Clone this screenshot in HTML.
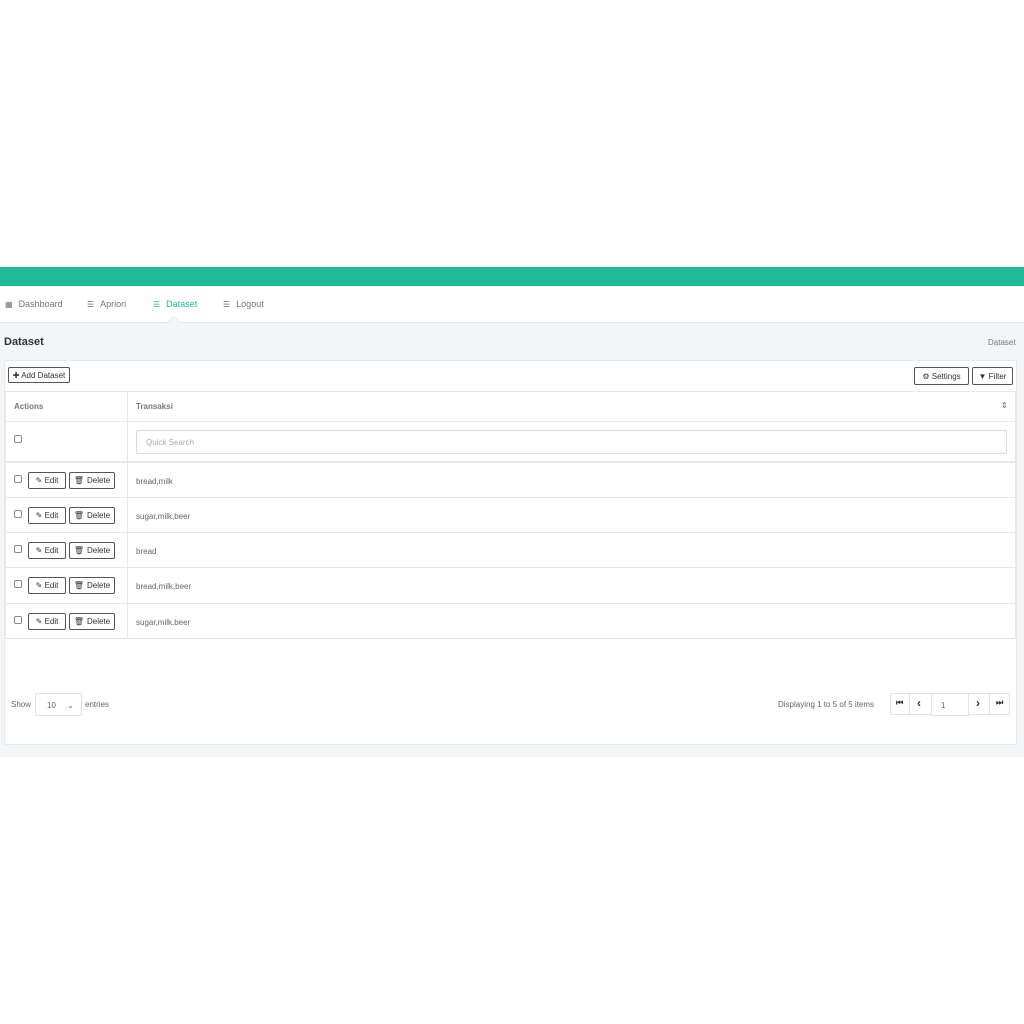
<!DOCTYPE html><html><head><style>
*{box-sizing:border-box;margin:0;padding:0}
body{width:1024px;height:1024px;background:#fff;font-family:"Liberation Sans",sans-serif;position:relative;overflow:hidden;color:#555}
.a{position:absolute}
.btn{position:absolute;border:1px solid #555;border-radius:2px;background:#fff;font-size:8px;color:#333;display:flex;align-items:center;justify-content:center;gap:3px}
.row{position:absolute;left:5px;width:1011px;border-bottom:1px solid #e6e8eb;background:#fff}
.cb{position:absolute;width:8px;height:8px;border:1px solid #888;border-radius:2px}
.t{font-size:8px;color:#666}
.nav{font-size:9px;color:#6b7380;display:flex;align-items:center;gap:6px}
.ic{filter:grayscale(1)}
</style></head><body>
<div class="a" style="top:267px;left:0;width:1024px;height:19px;background:#1dbb98"></div>
<div class="a" style="top:286px;left:0;width:1024px;height:37px;background:#fff;border-bottom:1px solid #e4e6ea"></div>
<div class="a" style="top:323px;left:0;width:1024px;height:434px;background:#f4f5f7"></div>
<div class="a" style="top:318px;left:169px;width:10px;height:10px;background:#f4f5f7;transform:rotate(45deg);border-left:1px solid #e4e6ea;border-top:1px solid #e4e6ea"></div>
<div class="a nav" style="top:299px;left:5px"><span style="font-size:8px">▦</span>Dashboard</div>
<div class="a nav" style="top:299px;left:87px"><span style="font-size:8px">☰</span>Apriori</div>
<div class="a nav" style="top:299px;left:153px;color:#1dbb98"><span style="font-size:8px">☰</span>Dataset</div>
<div class="a nav" style="top:299px;left:223px"><span style="font-size:8px">☰</span>Logout</div>
<div class="a" style="top:336px;left:4px;font-size:11px;font-weight:bold;color:#333">Dataset</div>
<div class="a" style="top:338px;left:988px;font-size:8px;color:#777">Dataset</div>
<div class="a" style="top:360px;left:4px;width:1013px;height:385px;background:#fff;border:1px solid #e6e8eb;border-radius:2px"></div>
<div class="btn" style="top:367px;left:8px;width:62px;height:16px">✚ Add Dataset</div>
<div class="btn" style="top:367px;left:914px;width:55px;height:18px">⚙ Settings</div>
<div class="btn" style="top:367px;left:972px;width:41px;height:18px">▼ Filter</div>
<div class="row" style="top:391px;height:31px;border-top:1px solid #e6e8eb"></div>
<div class="a t" style="top:402px;left:14px;font-weight:bold;color:#777">Actions</div>
<div class="a t" style="top:402px;left:136px;font-weight:bold;color:#777">Transaksi</div>
<div class="a t" style="top:401px;left:1001px">⇕</div>
<div class="row" style="top:422px;height:41px;border-bottom:2px solid #e6e8eb"></div>
<div class="cb" style="top:435px;left:14px"></div>
<div class="a" style="top:430px;left:136px;width:871px;height:24px;border:1px solid #d8dbe0;border-radius:2px;font-size:8px;color:#aaa;padding:7px 9px">Quick Search</div>
<div class="row" style="top:463px;height:35px"></div>
<div class="row" style="top:498px;height:35px"></div>
<div class="row" style="top:533px;height:35px"></div>
<div class="row" style="top:568px;height:36px"></div>
<div class="row" style="top:604px;height:35px"></div>
<div class="a" style="top:391px;left:5px;width:1px;height:248px;background:#e6e8eb"></div>
<div class="a" style="top:391px;left:127px;width:1px;height:248px;background:#e6e8eb"></div>
<div class="a" style="top:391px;left:1015px;width:1px;height:248px;background:#e6e8eb"></div>

<div class="cb" style="top:475px;left:14px"></div><div class="btn" style="top:472px;left:28px;width:38px;height:17px">✎ Edit</div><div class="btn" style="top:472px;left:69px;width:46px;height:17px"><span class="ic">🗑</span> Delete</div><div class="a t" style="top:477px;left:136px">bread,milk</div>
<div class="cb" style="top:510px;left:14px"></div><div class="btn" style="top:507px;left:28px;width:38px;height:17px">✎ Edit</div><div class="btn" style="top:507px;left:69px;width:46px;height:17px"><span class="ic">🗑</span> Delete</div><div class="a t" style="top:512px;left:136px">sugar,milk,beer</div>
<div class="cb" style="top:545px;left:14px"></div><div class="btn" style="top:542px;left:28px;width:38px;height:17px">✎ Edit</div><div class="btn" style="top:542px;left:69px;width:46px;height:17px"><span class="ic">🗑</span> Delete</div><div class="a t" style="top:547px;left:136px">bread</div>
<div class="cb" style="top:580px;left:14px"></div><div class="btn" style="top:577px;left:28px;width:38px;height:17px">✎ Edit</div><div class="btn" style="top:577px;left:69px;width:46px;height:17px"><span class="ic">🗑</span> Delete</div><div class="a t" style="top:582px;left:136px">bread,milk,beer</div>
<div class="cb" style="top:616px;left:14px"></div><div class="btn" style="top:613px;left:28px;width:38px;height:17px">✎ Edit</div><div class="btn" style="top:613px;left:69px;width:46px;height:17px"><span class="ic">🗑</span> Delete</div><div class="a t" style="top:618px;left:136px">sugar,milk,beer</div>

<div class="a t" style="top:700px;left:11px">Show</div>
<div class="a t" style="top:693px;left:35px;width:47px;height:23px;border:1px solid #dde0e4;border-radius:2px;padding:7px 11px">10<span style="position:absolute;right:7px">⌄</span></div>
<div class="a t" style="top:700px;left:85px">entries</div>
<div class="a t" style="top:700px;left:778px">Displaying 1 to 5 of 5 items</div>
<div class="a" style="top:693px;left:890px;width:120px;height:22px;border:1px solid #e0e2e6;border-radius:2px"></div>
<div class="a t" style="top:698px;left:896px;font-weight:bold;color:#333">⏮</div>
<div class="a t" style="top:696px;left:917px;font-weight:bold;font-size:12px;color:#333">‹</div>
<div class="a t" style="top:693px;left:931px;width:38px;height:23px;border:1px solid #e0e2e6;background:#fff;padding:7px 9px">1</div>
<div class="a t" style="top:696px;left:976px;font-weight:bold;font-size:12px;color:#333">›</div>
<div class="a t" style="top:698px;left:996px;font-weight:bold;color:#333">⏭</div>
<div class="a" style="top:693px;left:909px;width:1px;height:22px;background:#e0e2e6"></div>
<div class="a" style="top:693px;left:989px;width:1px;height:22px;background:#e0e2e6"></div>
</body></html>
